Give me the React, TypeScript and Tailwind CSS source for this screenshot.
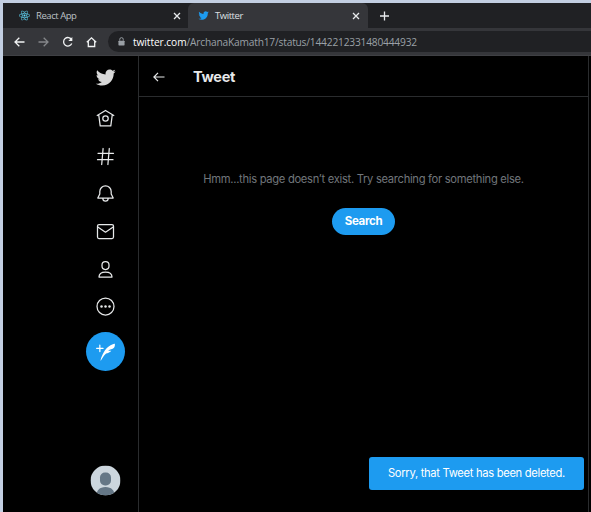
import type { ReactNode } from "react";
import { FaReact } from "react-icons/fa";

const BIRD =
  "M23.643 4.937c-.835.37-1.732.62-2.675.733.962-.576 1.7-1.49 2.048-2.578-.9.534-1.897.922-2.958 1.13-.85-.904-2.06-1.47-3.4-1.47-2.572 0-4.658 2.086-4.658 4.66 0 .364.042.718.12 1.06-3.873-.195-7.304-2.05-9.602-4.868-.4.69-.63 1.49-.63 2.342 0 1.616.823 3.043 2.072 3.878-.764-.025-1.482-.234-2.11-.583v.06c0 2.257 1.605 4.14 3.737 4.568-.392.106-.803.162-1.227.162-.3 0-.593-.028-.877-.082.593 1.85 2.313 3.198 4.352 3.234-1.595 1.25-3.604 1.995-5.786 1.995-.376 0-.747-.022-1.112-.065 2.062 1.323 4.51 2.093 7.14 2.093 8.57 0 13.255-7.098 13.255-13.254 0-.2-.005-.402-.014-.602.91-.658 1.7-1.477 2.323-2.41z";
const FEATHER =
  "M8.8 7.2H5.6V3.9c0-.4-.3-.8-.8-.8s-.7.4-.7.8v3.3H.8c-.4 0-.8.3-.8.8s.3.8.8.8h3.3v3.3c0 .4.3.8.8.8s.8-.3.8-.8V8.7H9c.4 0 .8-.3.8-.8s-.5-.7-1-.7zm15-4.9v-.1h-.1c-.1 0-9.2 1.2-14.4 11.7-3.8 7.6-3.6 9.9-3.3 9.9.3.1 3.4-6.5 6.7-9.2 5.2-1.1 6.6-3.6 6.6-3.6s-1.5.2-2.1.2c-.8 0-1.4-.2-1.7-.3 1.3-1.2 2.4-1.5 3.5-1.7.9-.2 1.8-.4 3-1.2 2.2-1.6 1.9-5.5 1.8-5.7z";

function Bird({ className }: { className: string }) {
  return (
    <svg viewBox="0 0 24 24" className={className} fill="currentColor">
      <path d={BIRD} />
    </svg>
  );
}

function Close() {
  return (
    <svg viewBox="0 0 8 8" className="size-2 shrink-0" stroke="#e8eaed" strokeWidth="1.3">
      <path d="M1 1l6 6M7 1l-6 6" />
    </svg>
  );
}

function NavIcon({ children }: { children: ReactNode }) {
  return (
    <svg
      viewBox="-0.5 -0.5 21 21"
      className="size-[21px]"
      fill="none"
      stroke="#e7e9ea"
      strokeWidth="1.25"
      strokeLinecap="round"
      strokeLinejoin="round"
    >
      {children}
    </svg>
  );
}

function TabStrip() {
  return (
    <div className="flex h-[25px] bg-[#202124] text-[9.5px] text-[#dfe1e5]">
      <div className="flex w-[185px] items-center pr-[7px] pl-4">
        <FaReact className="size-[11px] text-[#61dafb]" />
        <span className="ml-[6px] flex-1 pt-[2px] tracking-[-0.45px] text-[#bdc1c6]">React App</span>
        <Close />
      </div>
      <div className="flex w-[180px] items-center rounded-t-[6px] bg-[#35363a] pr-2 pl-[10px]">
        <Bird className="size-[11px] text-[#1d9bf0]" />
        <span className="ml-[6px] flex-1 pt-[2px] tracking-[-0.45px]">Twitter</span>
        <Close />
      </div>
      <svg viewBox="0 0 10 10" className="mt-2 ml-3 size-[10px]" stroke="#e8eaed" strokeWidth="1.3">
        <path d="M4.500 .5v9M0 5h9" />
      </svg>
    </div>
  );
}

function Toolbar() {
  return (
    <div className="flex h-7 items-center border-b border-[#3f4044] bg-[#35363a]">
      <svg viewBox="0 0 105 22" className="h-[22px] w-[105px] shrink-0" fill="none" strokeWidth="1.3">
        <path d="M21.5 11H12M16.3 6.7L12 11l4.3 4.3" stroke="#f1f3f4" />
        <path d="M35.5 11H45M40.7 6.7L45 11l-4.3 4.3" stroke="#85878a" />
        <path d="M68.7 8.8A4.3 4.3 0 1 0 68.8 12.6" stroke="#f1f3f4" />
        <path d="M69.3 6v4h-4z" fill="#f1f3f4" />
        <path d="M83.8 11.3L88.5 6.8l4.7 4.5M85.3 10.3v5.2h6.4v-5.2" stroke="#f1f3f4" />
      </svg>
      <div className="flex h-[21px] flex-1 items-center rounded-l-full bg-[#202124] pl-[10px] text-[10.2px]">
        <svg viewBox="0 0 8 10" className="h-[9px] w-[7px]" fill="none">
          <rect x="0.5" y="4" width="7" height="5.5" rx="0.7" fill="#9aa0a6" />
          <path d="M2 4V2.6a2 2 0 0 1 4 0V4" stroke="#9aa0a6" strokeWidth="1.1" />
        </svg>
        <span className="ml-[8px] pt-[2px] tracking-[-0.19px] whitespace-nowrap text-[#9aa0a6]">
          <span className="tracking-[-0.08px] text-white">twitter.com</span>/ArchanaKamath17/status/1442212331480444932
        </span>
      </div>
    </div>
  );
}

function Sidebar() {
  return (
    <nav className="flex w-[136px] flex-col items-end border-r border-[#2a2c2e]">
      <div className="mr-[13px] flex w-[39px] flex-1 flex-col items-center pb-4">
        <Bird className="mt-[11px] size-[21px] text-[#d9d9d9]" />
        <div className="mt-5 flex flex-col gap-[16.7px]">
          <NavIcon>
            <path d="M1.7 7L10 2l8.300 5M3.200 6.200l1.500 11.200h10.600l1.500-11.200" />
            <circle cx="10" cy="10" r="2.700" />
          </NavIcon>
          <NavIcon>
            <path d="M2.500 6.800h15.500M2 13.200h15.500M7.600 2L6.200 18M13.800 2l-1.400 16" />
          </NavIcon>
          <NavIcon>
            <path d="M4.300 10.500V8a5.700 5.700 0 0 1 11.400 0v2.500l2 4H2.300zM7.300 14.700a2.700 2.900 0 0 0 5.400 0" />
          </NavIcon>
          <NavIcon>
            <rect x="2" y="3" width="16" height="14" rx="1.500" />
            <path d="M2.300 5.500L10 10.700l7.700-5.200" />
          </NavIcon>
          <NavIcon>
            <rect x="6.500" y="2" width="7" height="8" rx="3.400" />
            <path d="M3.500 17.500c0-3.300 2.400-5 6.500-5s6.500 1.700 6.500 5z" />
          </NavIcon>
          <NavIcon>
            <circle cx="10" cy="10" r="8.500" />
            <g fill="#e7e9ea" stroke="none">
              <circle cx="6" cy="10" r="1.250" />
              <circle cx="10" cy="10" r="1.250" />
              <circle cx="14" cy="10" r="1.250" />
            </g>
          </NavIcon>
        </div>
        <button className="mt-[14.500px] flex size-[39px] shrink-0 items-center justify-center rounded-full bg-[#1d9bf0]">
          <svg viewBox="0 0 24 24" className="size-[19px]" fill="white">
            <path d={FEATHER} />
          </svg>
        </button>
        <svg viewBox="-0.500 -0.500 31 31" className="mt-auto size-[31px]">
          <clipPath id="avatar">
            <circle cx="15" cy="15" r="15" />
          </clipPath>
          <g clipPath="url(#avatar)">
            <rect width="30" height="30" fill="#ccd6dd" />
            <rect x="9.500" y="7" width="11" height="13" rx="5" fill="#657786" />
            <path d="M6 30c0-5 3-8.500 9-8.500s9 3.500 9 8.500z" fill="#657786" />
          </g>
        </svg>
      </div>
    </nav>
  );
}

export default function App() {
  return (
    <div className="flex h-[512px] w-[591px] flex-col border-t-[3px] border-l-[3px] border-[#c3cfe2] bg-black font-['Open_Sans','Noto_Sans',sans-serif]">
      <TabStrip />
      <Toolbar />
      <div className="flex min-h-0 flex-1">
        <Sidebar />
        <main className="flex w-[450px] flex-col border-r border-[#2a2c2e] font-['Inter','Liberation_Sans',sans-serif]">
          <header className="flex h-[41px] shrink-0 items-center border-b border-[#2a2c2e] pl-[14px]">
            <svg viewBox="0 0 12 10" className="mt-px h-[10px] w-3" fill="none" stroke="#e7e9ea" strokeWidth="1.200">
              <path d="M11.500 5H1M5 .8L.9 5 5 9.200" />
            </svg>
            <h1 className="ml-7 pt-[2px] text-[14.500px] font-bold tracking-[-0.3px] text-[#e7e9ea]">Tweet</h1>
          </header>
          <div className="flex flex-col items-center">
            <p className="mt-[74px] text-[11.200px] leading-4 tracking-[-0.3px] text-[#71767b]">
              Hmm...this page doesn’t exist. Try searching for something else.
            </p>
            <button className="mt-[20.500px] h-[27px] w-[63px] rounded-full bg-[#1d9bf0] pt-px text-[11.500px] font-bold tracking-[-0.350px] text-white">
              Search
            </button>
          </div>
          <div className="mt-auto mr-1 mb-[22.500px] flex h-[33px] w-[215px] items-center justify-center self-end rounded-[3px] bg-[#1d9bf0] pt-px text-[11.200px] tracking-[-0.310px] text-white">
            Sorry, that Tweet has been deleted.
          </div>
        </main>
      </div>
    </div>
  );
}
